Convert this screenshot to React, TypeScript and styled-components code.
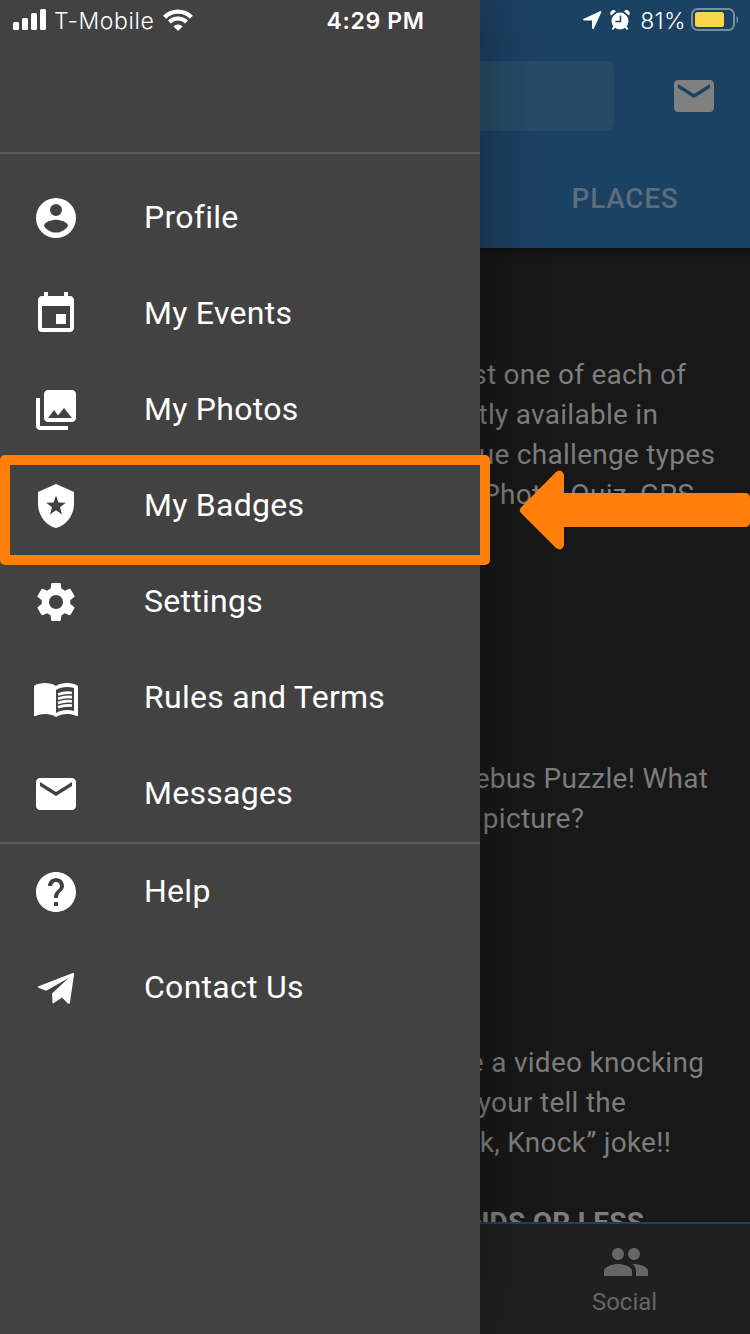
import React from "react";
import styled, { createGlobalStyle } from "styled-components";
import {
  MdEvent,
  MdCollections,
  MdMail,
  MdHelp,
  MdPeople,
} from "react-icons/md";

const GlobalStyle = createGlobalStyle`
  * { box-sizing: border-box; }
  body { margin: 0; background: #181818; overflow: hidden; }
`;

const Screen = styled.div`
  position: relative;
  width: 750px;
  height: 1334px;
  overflow: hidden;
  background: #181818;
  font-family: Roboto, sans-serif;
`;

/* Page behind the drawer */
const Page = styled.div`
  display: flex;
  flex-direction: column;
  width: 750px;
  height: 1334px;
`;

const Header = styled.header`
  display: flex;
  flex-direction: column;
  flex: none;
  height: 248px;
  padding-top: 61px;
  background: #1b4163;
  box-shadow: 0 3px 10px rgba(0, 0, 0, 0.45);
`;

const SearchRow = styled.div`
  display: flex;
  align-items: center;
  justify-content: space-between;
  height: 70px;
  padding: 0 32px 0 136px;
  color: #808080;
`;

const SearchField = styled.div`
  width: 478px;
  height: 70px;
  border-radius: 8px;
  background: #274b66;
`;

const Tabs = styled.nav`
  display: flex;
  justify-content: flex-end;
  margin-top: 19px;
`;

const Tab = styled.div`
  width: 250px;
  height: 96px;
  line-height: 97px;
  text-align: center;
  font-size: 28px;
  font-weight: 500;
  letter-spacing: 0.7px;
  color: #5c6d7a;
`;

const Feed = styled.main`
  flex: 1;
  min-height: 0;
  overflow: hidden;
  padding-top: 107px;
`;

const Post = styled.p<{ $gap: number; $bold?: boolean }>`
  margin: 0 0 ${(p) => p.$gap}px;
  font-size: 28px;
  line-height: 40px;
  letter-spacing: 0.28px;
  font-weight: ${(p) => (p.$bold ? 700 : 400)};
  color: #7d7d7d;
`;

const Line = styled.span<{ $end: number }>`
  display: block;
  padding-right: ${(p) => 749.8 - p.$end}px;
  text-align: right;
  white-space: nowrap;
`;

const BottomBar = styled.footer`
  display: flex;
  justify-content: flex-end;
  flex: none;
  height: 112px;
  border-top: 2px solid #1b4163;
  background: #202020;
`;

const BottomTab = styled.div`
  display: flex;
  flex-direction: column;
  align-items: center;
  width: 250px;
  padding: 14px 0 0 1px;
  color: #666;
  font-size: 24px;
  line-height: 32px;
`;

const BottomLabel = styled.span`
  padding-right: 2px;
`;

/* Drawer */
const Drawer = styled.aside`
  position: absolute;
  top: 0;
  left: 0;
  width: 480px;
  height: 1334px;
  padding-top: 152px;
  background: #424242;
  box-shadow: 0 0 60px rgba(0, 0, 0, 0.35);
`;

const Group = styled.ul<{ $top: number }>`
  margin: 0;
  padding: ${(p) => p.$top}px 0 0;
  list-style: none;
  border-top: 2px solid #5a5a5a;
`;

const Item = styled.li`
  display: flex;
  align-items: center;
  gap: 64px;
  height: 96px;
  padding-left: 32px;
  color: #fff;
`;

const Label = styled.span`
  padding-bottom: 2px;
  font-size: 32px;
  line-height: 40px;
  letter-spacing: 0.28px;
`;

/* Highlight over the drawer */
const Highlight = styled.div`
  position: absolute;
  top: 455px;
  left: 0;
  width: 490px;
  height: 110px;
  border: 10px solid #ff7f0a;
  border-radius: 5px;
`;

const Arrow = styled.svg`
  position: absolute;
  top: 465px;
  left: 515px;
`;

/* Status bar */
const StatusBar = styled.div`
  position: absolute;
  top: 0;
  left: 0;
  display: grid;
  grid-template-columns: 1fr auto 1fr;
  align-items: center;
  width: 750px;
  height: 40px;
  padding: 0 11px 0 13px;
  font-family: Inter, sans-serif;
  font-size: 23px;
  color: #fff;
`;

const StatusGroup = styled.div<{ $end?: boolean }>`
  display: flex;
  align-items: center;
  justify-content: ${(p) => (p.$end ? "flex-end" : "flex-start")};
`;

const Carrier = styled.span`
  margin: 0 9px 0 7px;
  padding-top: 2px;
  font-weight: 300;
  letter-spacing: 0.6px;
`;

const Clock = styled.span`
  padding: 2px 1px 0 0;
  font-weight: 600;
  letter-spacing: 0.65px;
`;

const Percent = styled.span`
  margin: 0 5px 0 10px;
  padding-top: 2px;
  font-weight: 300;
  letter-spacing: 0.4px;
`;

const Signal = () => (
  <svg width="34" height="22" viewBox="0 0 34 22" fill="#fff">
    <rect x="0" y="13" width="6" height="8" rx="1.5" />
    <rect x="9" y="9" width="6" height="12" rx="1.5" />
    <rect x="18" y="4" width="6" height="17" rx="1.5" />
    <rect x="27" y="0" width="6" height="21" rx="1.5" />
  </svg>
);

const Wifi = () => (
  <svg width="30" height="22" viewBox="0 0 30 22" fill="none" stroke="#fff">
    <path d="M1.6 8.2a19 19 0 0 1 26.8 0" strokeWidth="4.4" />
    <path d="M6.4 13a12.2 12.2 0 0 1 17.2 0" strokeWidth="4" />
    <path d="M15 22l-4.6-4.6a6.500 6.500 0 0 1 9.200 0z" fill="#fff" stroke="none" />
  </svg>
);

const LocationSvg = styled.svg`
  margin-right: 8px;
`;

const Location = () => (
  <LocationSvg width="20" height="20" viewBox="0 0 20 20" fill="#fff">
    <path d="M18 1.200c.9-.4 1.600.3 1.200 1.200l-7.300 16c-.5 1.100-1.900.8-1.900-.4v-7.500H2.200C.9 10.500.700 9.200 1.800 8.700z" />
  </LocationSvg>
);

const Alarm = () => (
  <svg width="20" height="21" viewBox="0 0 20 21">
    <circle cx="10" cy="11" r="8.500" fill="#fff" />
    <path d="M4.500 16.500 2.500 19.300M15.500 16.500l2 2.800" stroke="#fff" strokeWidth="2" />
    <path d="M1.100 5.500A3.200 3.200 0 0 1 6 1.300zM18.900 5.500A3.200 3.200 0 0 0 14 1.300z" fill="#fff" />
    <path d="M10.500 5.500v6H5.500" fill="none" stroke="#1b4163" strokeWidth="1.500" />
  </svg>
);

const Battery = () => (
  <svg width="48" height="24" viewBox="0 0 48 24">
    <rect x="1" y="1" width="42" height="21" rx="5.500" fill="none" stroke="#768ea2" strokeWidth="2" />
    <rect x="4" y="4" width="29" height="15" rx="2.500" fill="#f9d749" />
    <path d="M45.500 8c2.200 1.200 2.200 6 0 7.200z" fill="#768ea2" />
  </svg>
);

const AccountIcon = () => (
  <svg width="48" height="48" viewBox="0 0 24 24" fill="currentColor" fillRule="evenodd">
    <path d="M12 2a10 10 0 1 0 0 20 10 10 0 0 0 0-20zm0 3a3 3 0 1 1 0 6 3 3 0 0 1 0-6zm0 14.300c-2.500 0-4.710-1.380-6-3.320.030-1.990 4-3.080 6-3.080s5.970 1.090 6 3.080c-1.290 1.940-3.500 3.320-6 3.320z" />
  </svg>
);

const ShieldIcon = () => (
  <svg width="48" height="48" viewBox="0 0 24 24" fill="currentColor" fillRule="evenodd">
    <path d="M12 1 3 5v6c0 5.550 3.840 10.740 9 12 5.160-1.260 9-6.450 9-12V5zM12 6.800l1.230 3.510 3.710.090-2.950 2.250 1.060 3.560L12 14.100l-3.050 2.110 1.060-3.560-2.950-2.250 3.710-.090z" />
  </svg>
);

const GearIcon = () => (
  <svg width="48" height="48" viewBox="-0.600 -0.600 25.200 25.200" fill="currentColor">
    <path d="M19.430 12.980c.040-.320.070-.640.070-.980s-.030-.660-.070-.980l2.110-1.650c.190-.150.240-.420.120-.640l-2-3.460c-.120-.220-.390-.300-.610-.220l-2.490 1c-.520-.400-1.080-.730-1.690-.980l-.380-2.650C14.460 2.180 14.250 2 14 2h-4c-.250 0-.460.180-.490.420l-.380 2.650c-.610.250-1.170.590-1.690.980l-2.490-1c-.230-.090-.490 0-.610.220l-2 3.460c-.130.220-.070.490.120.640l2.110 1.650c-.040.320-.070.650-.070.980s.030.660.070.980l-2.110 1.650c-.190.150-.240.420-.120.640l2 3.460c.120.220.390.300.610.220l2.490-1c.520.400 1.080.730 1.690.980l.380 2.650c.030.240.240.420.490.420h4c.250 0 .460-.180.490-.420l.380-2.650c.610-.250 1.170-.590 1.690-.980l2.490 1c.230.090.490 0 .610-.220l2-3.460c.120-.220.070-.490-.120-.640zM12 15.700a3.700 3.700 0 1 1 0-7.400 3.700 3.700 0 0 1 0 7.400z" />
  </svg>
);

const BookIcon = () => (
  <svg width="48" height="48" viewBox="0 0 24 24" fill="currentColor">
    <path d="M21 5c-1.110-.350-2.330-.500-3.500-.500-1.950 0-4.050.400-5.500 1.500-1.450-1.100-3.550-1.500-5.500-1.500S2.450 4.900 1 6v14.650c0 .250.250.500.500.500C3.100 20.450 5.050 20 6.500 20c1.950 0 4.050.400 5.500 1.500 1.350-.850 3.800-1.500 5.500-1.500 1.650 0 3.350.300 4.750 1.050.500.200.750-.150.750-.400V6c-.600-.450-1.250-.750-2-1zm0 13.500c-1.100-.350-2.300-.500-3.500-.500-1.700 0-4.150.650-5.500 1.500V8c1.350-.850 3.800-1.500 5.500-1.500 1.200 0 2.400.150 3.500.500z" />
    <path d="M13 10.300q3.500-1.300 7-.800M13 12.400q3.500-1.300 7-.800M13 14.500q3.500-1.300 7-.800M13 16.600q3.500-1.300 7-.800" fill="none" stroke="currentColor" strokeWidth="1.350" />
  </svg>
);

const PlaneIcon = () => (
  <svg width="48" height="48" viewBox="0 0 48 48" fill="currentColor">
    <path d="M6.500 22.200 40.800 9c.9-.3 1.500.2 1.300 1.200l-4.200 28.600c-.2 1.100-1.200 1.400-2 .6L30 33.600l-8.500 5.700c-.5.3-1 0-1-.6l-.5-9.300 16.300-15.100-21.300 11.900c-.5.300-1 .300-1.500.200l-7-2.700c-.8-.4-.8-1.200 0-1.500z" />
  </svg>
);

const mainItems = [
  { label: "Profile", icon: <AccountIcon /> },
  { label: "My Events", icon: <MdEvent size={48} /> },
  { label: "My Photos", icon: <MdCollections size={48} /> },
  { label: "My Badges", icon: <ShieldIcon /> },
  { label: "Settings", icon: <GearIcon /> },
  { label: "Rules and Terms", icon: <BookIcon /> },
  { label: "Messages", icon: <MdMail size={48} /> },
];

const helpItems = [
  { label: "Help", icon: <MdHelp size={48} /> },
  { label: "Contact Us", icon: <PlaneIcon /> },
];

export default function App() {
  return (
    <Screen>
      <GlobalStyle />
      <Page>
        <Header>
          <SearchRow>
            <SearchField />
            <MdMail size={48} />
          </SearchRow>
          <Tabs>
            <Tab>PLACES</Tab>
          </Tabs>
        </Header>
        <Feed>
          <Post $gap={244}>
            <Line $end={686}>st one of each of</Line>
            <Line $end={658}>tly available in</Line>
            <Line $end={715}>ue challenge types</Line>
            <Line $end={694}>Photo, Quiz, GPS</Line>
          </Post>
          <Post $gap={204}>
            <Line $end={708}>ebus Puzzle! What</Line>
            <Line $end={584}>picture?</Line>
          </Post>
          <Post $gap={40}>
            <Line $end={704}>e a video knocking</Line>
            <Line $end={626}>your tell the</Line>
            <Line $end={671}>k, Knock” joke!!</Line>
          </Post>
          <Post $gap={0} $bold>
            <Line $end={644}>NDS OR LESS</Line>
          </Post>
        </Feed>
        <BottomBar>
          <BottomTab>
            <MdPeople size={48} />
            <BottomLabel>Social</BottomLabel>
          </BottomTab>
        </BottomBar>
      </Page>
      <Drawer>
        <Group $top={16}>
          {mainItems.map((item) => (
            <Item key={item.label}>
              {item.icon}
              <Label>{item.label}</Label>
            </Item>
          ))}
        </Group>
        <Group $top={0}>
          {helpItems.map((item) => (
            <Item key={item.label}>
              {item.icon}
              <Label>{item.label}</Label>
            </Item>
          ))}
        </Group>
      </Drawer>
      <Highlight />
      <Arrow width="235" height="90" viewBox="0 0 235 90" fill="#ff7f0a">
        <path d="M6 42.500 40.500 7.500C44 4 49 6 49 11v17h181q5 0 5 5v24q0 5-5 5H49v17c0 5-5 7-8.500 3.500L6 48q-2.500-3 0-5.500z" />
      </Arrow>
      <StatusBar>
        <StatusGroup>
          <Signal />
          <Carrier>T-Mobile</Carrier>
          <Wifi />
        </StatusGroup>
        <Clock>4:29 PM</Clock>
        <StatusGroup $end>
          <Location />
          <Alarm />
          <Percent>81%</Percent>
          <Battery />
        </StatusGroup>
      </StatusBar>
    </Screen>
  );
}
